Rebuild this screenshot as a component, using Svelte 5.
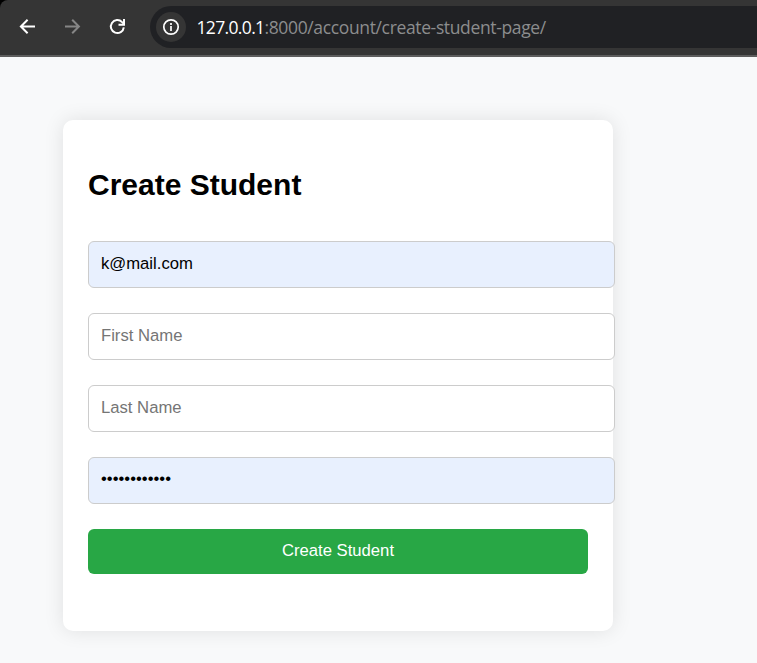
<script>
  let fields = $state([
    { name: 'email', type: 'text', placeholder: 'Email', value: 'k@mail.com', filled: true },
    { name: 'first', type: 'text', placeholder: 'First Name', value: '', filled: false },
    { name: 'last', type: 'text', placeholder: 'Last Name', value: '', filled: false },
    { name: 'password', type: 'password', placeholder: 'Password', value: 'student12345', filled: true }
  ]);
</script>

<div class="window">
  <header class="toolbar">
    <nav>
      <svg class="icon" viewBox="0 0 20 20" aria-label="Back">
        <path d="M17 9.5H3.5M9.6 2.8 2.9 9.5l6.7 6.7" />
      </svg>
      <svg class="icon dim" viewBox="0 0 20 20" aria-label="Forward">
        <path d="M2 9.5h13.5M9.2 2.8l6.7 6.7-6.7 6.7" />
      </svg>
      <svg class="icon" viewBox="0 0 20 20" aria-label="Reload">
        <path d="M15.8 10.3a6.5 6.5 0 1 1-1.7-5.2L16 7" />
        <path d="M16 2v5.7H10.5" />
      </svg>
    </nav>
    <div class="address">
      <span class="info">
        <svg viewBox="0 0 18 18" aria-label="Site information">
          <circle cx="9" cy="9" r="7.2" />
          <path d="M9 8v5M9 5v2" />
        </svg>
      </span>
      <span class="host">127.0.0.1</span><span class="path">:8000/account/create-student-page/</span>
    </div>
  </header>

  <main>
    <form class="card" onsubmit={(e) => e.preventDefault()}>
      <h2>Create Student</h2>
      {#each fields as field (field.name)}
        <input
          class:filled={field.filled}
          type={field.type}
          placeholder={field.placeholder}
          aria-label={field.placeholder}
          bind:value={field.value}
        />
      {/each}
      <button type="submit">Create Student</button>
    </form>
  </main>
</div>

<style>
  :global(body) {
    margin: 0;
    background: #000;
  }
  .window {
    height: 663px;
    display: flex;
    flex-direction: column;
    overflow: hidden;
    font-family: 'Liberation Sans', Arial, sans-serif;
  }
  .toolbar {
    box-sizing: border-box;
    flex: none;
    height: 57px;
    display: flex;
    padding-top: 6px;
    background: #353535;
    border-bottom: 2px solid #5d5d5d;
    border-top-left-radius: 8px;
  }
  nav {
    display: flex;
    flex: none;
    gap: 25px;
    width: 132px;
    padding: 11px 0 0 18px;
    box-sizing: border-box;
    margin-right: 18px;
  }
  .icon {
    flex: none;
    width: 20px;
    height: 20px;
    fill: none;
    stroke: #fff;
    stroke-width: 2;
  }
  .dim {
    stroke: #868686;
  }
  .address {
    flex: 1;
    box-sizing: border-box;
    height: 42px;
    display: flex;
    align-items: center;
    padding-left: 6px;
    border-radius: 21px 0 0 21px;
    background: #202124;
    font-family: 'Open Sans', 'Noto Sans', sans-serif;
    font-size: 17.5px;
    white-space: nowrap;
  }
  .info {
    display: flex;
    align-items: center;
    justify-content: center;
    width: 30px;
    height: 30px;
    margin-right: 10.5px;
    border-radius: 50%;
    background: #353535;
  }
  .info svg {
    width: 18px;
    height: 18px;
    fill: none;
    stroke: #fff;
    stroke-width: 1.7;
  }
  .host {
    color: #fff;
    letter-spacing: -0.65px;
  }
  .path {
    color: #8c8d8e;
    letter-spacing: -0.36px;
  }
  main {
    flex: 1;
    padding: 63px 0 0 63px;
    background: #f8f9fa;
  }
  .card {
    box-sizing: border-box;
    width: 550px;
    height: 511px;
    padding: 47px 25px 0;
    display: flex;
    flex-direction: column;
    align-items: flex-start;
    border-radius: 10px;
    background: #fff;
    box-shadow: 0 0 20px rgba(0, 0, 0, 0.1);
  }
  h2 {
    margin: 0 0 39px;
    font-size: 30px;
    line-height: 35px;
  }
  input {
    box-sizing: border-box;
    flex: none;
    width: 527px;
    height: 47px;
    margin: 0 0 25px;
    padding: 0 12px 2px;
    border: 1px solid #ccc;
    border-radius: 6px;
    outline: none;
    background: #fff;
    color: #000;
    font: 16.667px 'Liberation Sans', Arial, sans-serif;
  }
  input.filled {
    background: #e8f0fe;
  }
  input[type='password'] {
    padding-bottom: 3px;
  }
  input::placeholder {
    color: #757575;
  }
  button {
    width: 500px;
    height: 45px;
    padding: 0 0 2px;
    border: 0;
    border-radius: 6px;
    background: #28a745;
    color: #fff;
    font: 16.667px 'Liberation Sans', Arial, sans-serif;
  }
</style>
